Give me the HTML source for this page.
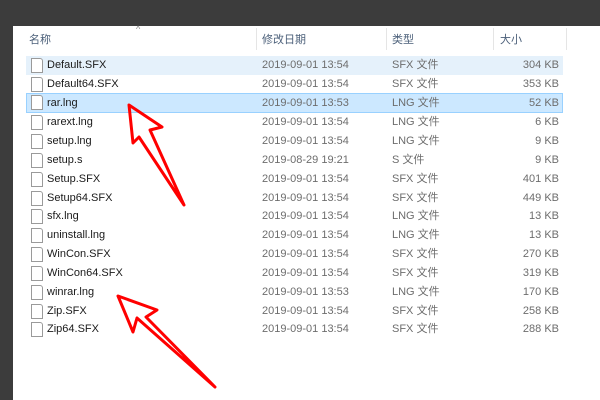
<!DOCTYPE html><html><head><style>
body{margin:0;width:600px;height:400px;background:#3c3c3c;position:relative;overflow:hidden;font-family:"Liberation Sans","Noto Sans CJK SC",sans-serif;font-size:11px}
#p{position:absolute;left:13px;top:26px;width:587px;height:374px;background:#fff}
.h{position:absolute;top:31px;color:#4c607a;font-size:11px}
.sep{position:absolute;top:28px;height:22px;width:1px;background:#e5e5e5}
.r{position:absolute;left:26px;width:537px;height:19px;line-height:19px;color:#1a1a1a}
.r span{position:absolute}
.n{left:21px}.d{left:236px;color:#6d6d6d}.t{left:366px;color:#6d6d6d}.s{right:4px;color:#6d6d6d}
.ic{position:absolute;left:5px;top:2px;width:10px;height:13px;border:1px solid #9a9a9a;background:#fff;border-top-right-radius:3px}
</style></head><body>
<div id="p"></div>
<div class="h" style="left:29px">名称</div>
<div class="h" style="left:262px">修改日期</div>
<div class="h" style="left:392px">类型</div>
<div class="h" style="left:500px">大小</div>
<div style="position:absolute;left:136px;top:24px;color:#888;font-size:9px">^</div>
<div class="sep" style="left:256px"></div><div class="sep" style="left:386px"></div><div class="sep" style="left:493px"></div><div class="sep" style="left:566px"></div>
<div class="r" style="top:56px;background:#e5f1fb"><i class="ic"></i><span class="n">Default.SFX</span><span class="d">2019-09-01 13:54</span><span class="t">SFX 文件</span><span class="s">304 KB</span></div>
<div class="r" style="top:75px"><i class="ic"></i><span class="n">Default64.SFX</span><span class="d">2019-09-01 13:54</span><span class="t">SFX 文件</span><span class="s">353 KB</span></div>
<div class="r" style="top:93px;height:18px;line-height:18px;background:#cce8ff;border:1px solid #99d1ff;width:535px"><i class="ic" style="left:4px;top:1px"></i><span class="n" style="left:20px">rar.lng</span><span class="d" style="left:235px">2019-09-01 13:53</span><span class="t" style="left:365px">LNG 文件</span><span class="s" style="right:3px">52 KB</span></div>
<div class="r" style="top:113px"><i class="ic"></i><span class="n">rarext.lng</span><span class="d">2019-09-01 13:54</span><span class="t">LNG 文件</span><span class="s">6 KB</span></div>
<div class="r" style="top:132px"><i class="ic"></i><span class="n">setup.lng</span><span class="d">2019-09-01 13:54</span><span class="t">LNG 文件</span><span class="s">9 KB</span></div>
<div class="r" style="top:151px"><i class="ic"></i><span class="n">setup.s</span><span class="d">2019-08-29 19:21</span><span class="t">S 文件</span><span class="s">9 KB</span></div>
<div class="r" style="top:170px"><i class="ic"></i><span class="n">Setup.SFX</span><span class="d">2019-09-01 13:54</span><span class="t">SFX 文件</span><span class="s">401 KB</span></div>
<div class="r" style="top:189px"><i class="ic"></i><span class="n">Setup64.SFX</span><span class="d">2019-09-01 13:54</span><span class="t">SFX 文件</span><span class="s">449 KB</span></div>
<div class="r" style="top:207px"><i class="ic"></i><span class="n">sfx.lng</span><span class="d">2019-09-01 13:54</span><span class="t">LNG 文件</span><span class="s">13 KB</span></div>
<div class="r" style="top:226px"><i class="ic"></i><span class="n">uninstall.lng</span><span class="d">2019-09-01 13:54</span><span class="t">LNG 文件</span><span class="s">13 KB</span></div>
<div class="r" style="top:245px"><i class="ic"></i><span class="n">WinCon.SFX</span><span class="d">2019-09-01 13:54</span><span class="t">SFX 文件</span><span class="s">270 KB</span></div>
<div class="r" style="top:264px"><i class="ic"></i><span class="n">WinCon64.SFX</span><span class="d">2019-09-01 13:54</span><span class="t">SFX 文件</span><span class="s">319 KB</span></div>
<div class="r" style="top:283px"><i class="ic"></i><span class="n">winrar.lng</span><span class="d">2019-09-01 13:53</span><span class="t">LNG 文件</span><span class="s">170 KB</span></div>
<div class="r" style="top:302px"><i class="ic"></i><span class="n">Zip.SFX</span><span class="d">2019-09-01 13:54</span><span class="t">SFX 文件</span><span class="s">258 KB</span></div>
<div class="r" style="top:320px"><i class="ic"></i><span class="n">Zip64.SFX</span><span class="d">2019-09-01 13:54</span><span class="t">SFX 文件</span><span class="s">288 KB</span></div>
<svg style="position:absolute;left:0;top:0" width="600" height="400"><g fill="none" stroke="#f00" stroke-width="3" stroke-linejoin="round" stroke-linecap="round">
<polygon points="129,105 162,127 150,130 184,205 139,137 133,143"/>
<polygon points="118,296 157,310 146,317 215,387 137,318 133,332"/>
</g></svg>
</body></html>
